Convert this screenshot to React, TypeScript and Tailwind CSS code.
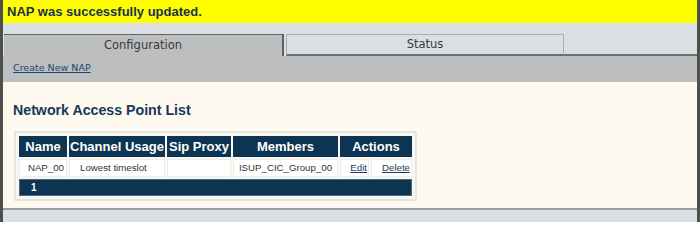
const sans = { fontFamily: '"Liberation Sans", Arial, sans-serif' };

const rows = [
  { name: 'NAP_00', usage: 'Lowest timeslot', proxy: '', members: 'ISUP_CIC_Group_00' },
];

const App = () => {
  return (
    <div className="w-[700px] h-[222px] bg-[#4d504d] pl-[3px] pr-[3px] overflow-hidden">
      <div className="h-full flex flex-col bg-[#d9dfe2]">
        {/* status banner */}
        <div
          className="h-[23px] bg-[#ffff00] pl-[4px] flex items-center text-[13px] font-bold text-[#1a3149]"
          style={sans}
        >
          NAP was successfully updated.
        </div>

        {/* tabs */}
        <div className="h-[33px] pt-[11px] pl-[1px] flex items-end bg-[#d9dfe2] font-['DejaVu_Sans',sans-serif] text-[11.5px] text-[#3a3a3a]">
          <div className="w-[280px] h-[22px] bg-[#bdbebf] border-t border-r-2 border-[#5e6260] flex items-center justify-center">
            Configuration
          </div>
          <div className="ml-[2px] w-[278px] h-[22px] border border-b-2 border-[#a9adaf] border-b-[#6b6e6d] flex items-center justify-center">
            Status
          </div>
          <div className="flex-1 h-[22px] border-b-2 border-[#6b6e6d]" />
        </div>

        <div className="h-[26px] bg-[#bdbebf] pl-[10px] pt-[5px] font-['DejaVu_Sans',sans-serif] text-[9.5px]">
          <a href="#" className="underline text-[#23466a]">Create New NAP</a>
        </div>

        {/* content */}
        <div className="h-[126px] bg-[#fefaf0] pl-[10px] pt-[19px]" style={sans}>
          <h2 className="text-[14.2px] font-bold text-[#17385a] leading-[18px]">Network Access Point List</h2>
          <div className="mt-[12px] ml-[1px] w-fit border-2 border-[#e6e6e0] bg-[#f9f7ef] p-[1px]">
            <table className="table-fixed w-[397px] border-separate border-spacing-[2px]">
              <colgroup>
                <col className="w-[48px]" />
                <col className="w-[96px]" />
                <col className="w-[64px]" />
                <col className="w-[105px]" />
                <col className="w-[29px]" />
                <col className="w-[41px]" />
              </colgroup>
              <thead>
                <tr className="text-white text-[13px] font-bold h-[21px]">
                  <th className="bg-[#0d3553] whitespace-nowrap p-0">Name</th>
                  <th className="bg-[#0d3553] whitespace-nowrap p-0">Channel Usage</th>
                  <th className="bg-[#0d3553] whitespace-nowrap p-0">Sip Proxy</th>
                  <th className="bg-[#0d3553] p-0">Members</th>
                  <th className="bg-[#0d3553] p-0" colSpan={2}>Actions</th>
                </tr>
              </thead>
              <tbody className="text-[9.7px] text-[#333]">
                {rows.map((row) => (
                  <tr key={row.name} className="h-[18px]">
                    <td className="bg-white text-right pr-[2px] border border-[#eeeeea]">{row.name}</td>
                    <td className="bg-white text-left pl-[10px] border border-[#eeeeea]">{row.usage}</td>
                    <td className="bg-white text-center border border-[#eeeeea] p-0">{row.proxy}</td>
                    <td className="bg-white text-center border border-[#eeeeea] p-0 whitespace-nowrap">{row.members}</td>
                    <td className="bg-white text-right pr-[1px] border border-[#eeeeea]">
                      <a href="#" className="underline text-[#1d3a58]">Edit</a>
                    </td>
                    <td className="bg-white text-right pr-[1px] border border-[#eeeeea]">
                      <a href="#" className="underline text-[#1d3a58]">Delete</a>
                    </td>
                  </tr>
                ))}
                <tr className="h-[17px]">
                  <td colSpan={6} className="bg-[#0d3553] text-white font-bold text-[10px] pl-[11px] border border-[#4a6a82]">
                    1
                  </td>
                </tr>
              </tbody>
            </table>
          </div>
        </div>

        <div className="h-[2px] bg-[#9a9c9c]" />
        <div className="flex-1 bg-[#d9dfe2]" />
      </div>
    </div>
  );
};

export default App;
